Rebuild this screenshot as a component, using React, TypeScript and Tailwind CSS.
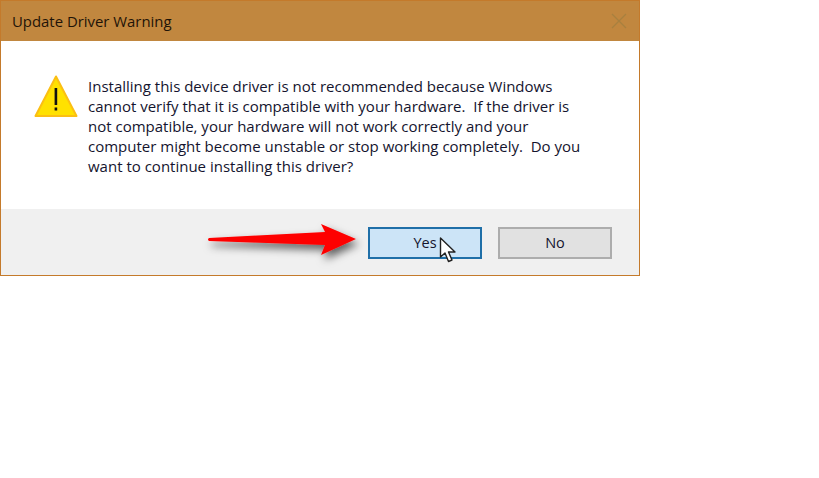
import React from 'react';

const lines = [
  'Installing this device driver is not recommended because Windows',
  'cannot verify that it is compatible with your hardware.  If the driver is',
  'not compatible, your hardware will not work correctly and your',
  'computer might become unstable or stop working completely.  Do you',
  'want to continue installing this driver?',
];

const WarningIcon = () => (
  <svg width="44" height="42" viewBox="0 0 44 42" className="shrink-0">
    <path d="M22 1.5 L42.5 41 L1.5 41 Z" fill="#ffe100" stroke="#fbbf13" strokeWidth="2" strokeLinejoin="round" />
    <rect x="20.6" y="13" width="2.6" height="17" fill="#111" />
    <rect x="20.6" y="32.5" width="2.6" height="3" fill="#111" />
  </svg>
);

const RedArrow = () => (
  <svg width="170" height="60" viewBox="0 0 170 60" className="absolute left-[200px] top-[209px] overflow-visible">
    <defs>
      <filter id="arrowShadow" x="-20%" y="-60%" width="140%" height="220%">
        <feDropShadow dx="3" dy="5" stdDeviation="4" floodColor="#000" floodOpacity="0.6" />
      </filter>
    </defs>
    <path d="M9 29 L125 23 L121 15 L156 30 L121 46 L125 36 L9 32 Q7 30.5 9 29 Z" fill="#fe0000" filter="url(#arrowShadow)" />
  </svg>
);

const Cursor = () => (
  <svg width="18" height="26" viewBox="0 0 18 26" className="absolute left-[439px] top-[237px]">
    <path d="M1.5 1 L1.5 20 L6 16 L9.5 24.5 L13 23 L9.5 15 L16 15 Z" fill="#fff" stroke="#222" strokeWidth="1.4" strokeLinejoin="round" />
  </svg>
);

export default function App() {
  return (
    <div className="relative min-h-[478px] w-[819px] bg-white font-['Open_Sans',sans-serif] overflow-hidden">
      <div className="w-[640px] h-[276px] border border-[#c47a2b] flex flex-col">
        <div className="h-[40px] bg-[#c1873f] flex items-center justify-between pl-[11px] pr-[12px] shrink-0">
          <span className="text-[14.9px] text-[#1f1408]">Update Driver Warning</span>
          <svg width="16" height="16" viewBox="0 0 16 16">
            <path d="M1 1 L15 15 M15 1 L1 15" stroke="#a8803f" strokeWidth="1.3" fill="none" />
          </svg>
        </div>
        <div className="h-[168px] bg-white flex items-start pl-[33px] pt-[34px] gap-[10px] shrink-0">
          <WarningIcon />
          <div className="text-[15px] leading-[20px] text-[#14142e] mt-[1px]">
            {lines.map((line) => (
              <div key={line} className="whitespace-pre">{line}</div>
            ))}
          </div>
        </div>
        <div className="flex-1 bg-[#f0f0f0] flex items-start justify-end gap-[16px] pt-[18px] pr-[27px]">
          <button className="w-[114px] h-[32px] bg-[#cce4f7] border-2 border-[#1f6fa8] text-[14.5px] text-[#14142e]">Yes</button>
          <button className="w-[114px] h-[32px] bg-[#e1e1e1] border-2 border-[#adadad] text-[14.5px] text-[#14142e]">No</button>
        </div>
      </div>
      <RedArrow />
      <Cursor />
    </div>
  );
}
